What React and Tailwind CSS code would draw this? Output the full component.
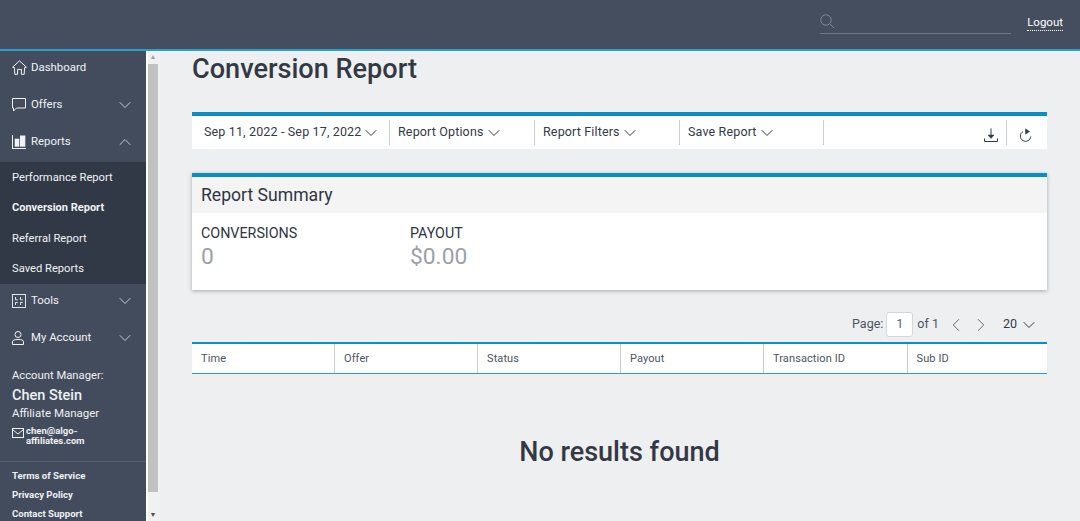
import React from "react";
import { ChevronDown, ChevronUp, ChevronLeft, ChevronRight } from "lucide-react";

const Home = () => (
  <svg width="15" height="15" viewBox="0 0 15 15" fill="none" stroke="currentColor" strokeWidth="1">
    <path d="M0.6 7.2 L7.5 0.8 L14.4 7.2 L12.6 7.6 L12.2 14.3 L9.4 14.3 L9.4 9.4 L5.6 9.4 L5.6 14.3 L2.8 14.3 L2.4 7.6 Z" />
  </svg>
);
const Chat = () => (
  <svg width="14" height="14" viewBox="0 0 14 14" fill="none" stroke="currentColor" strokeWidth="1">
    <path d="M0.5 0.5 H13.5 V10 H4.5 L1.5 13 V10 H0.5 Z" />
  </svg>
);
const Bars = () => (
  <svg width="14" height="14" viewBox="0 0 14 14" fill="currentColor">
    <path d="M0 0 H1 V13 H14 V14 H0 Z" />
    <rect x="2.7" y="3.7" width="4.6" height="8" />
    <rect x="8" y="0.5" width="5.3" height="11.2" />
  </svg>
);
const ToolsIcon = () => (
  <svg width="14" height="14" viewBox="0 0 14 14" fill="none" stroke="currentColor" strokeWidth="0.9">
    <rect x="0.5" y="0.5" width="13" height="13" />
    <path d="M3.5 3 V5.8 H5.8 M8.5 3 V5.8 H10.8 M3.5 8.5 H5.8 M3.5 8.5 V11 M8.5 8.5 H10.8 M8.5 8.5 V11" />
  </svg>
);
const User = () => (
  <svg width="12" height="14" viewBox="0 0 12 14" fill="none" stroke="currentColor" strokeWidth="1">
    <circle cx="6" cy="3.5" r="3" />
    <path d="M0.5 13.5 V10.6 C0.5 9.2 2.5 8.5 6 8.5 C9.5 8.5 11.5 9.2 11.5 10.6 V13.5 Z" />
  </svg>
);
const Mail = () => (
  <svg width="12" height="10" viewBox="0 0 12 10" fill="none" stroke="currentColor" strokeWidth="1">
    <rect x="0.5" y="0.5" width="11" height="9" />
    <path d="M0.5 1.5 L6 6 L11.5 1.5" />
  </svg>
);
const Search = () => (
  <svg width="15" height="15" viewBox="0 0 15 15" fill="none" stroke="#7d8694" strokeWidth="1">
    <circle cx="6" cy="6" r="5.2" />
    <path d="M9.8 9.8 L14 14" />
  </svg>
);
const Download = () => (
  <svg width="14" height="15" viewBox="0 0 14 15" fill="none" stroke="#333a47">
    <path d="M0.5 10.5 V13.5 H13.5 V10.5" strokeWidth="1" />
    <path d="M7 0.5 V8" strokeWidth="1" />
    <path d="M4 7 H10 L7 10.5 Z" fill="#333a47" strokeWidth="0.5" />
  </svg>
);
const Refresh = () => (
  <svg width="13" height="15" viewBox="0 0 13 15" fill="none" stroke="#333a47" strokeWidth="1">
    <path d="M4 3.6 A5.2 5.2 0 1 0 11.8 8.5" />
    <path d="M6.5 0.8 L10.5 3.5 L6.5 6.2 Z" fill="#333a47" strokeWidth="0.5" />
  </svg>
);

const Nav = ({ icon, label, chevron }) => (
  <div className="h-[37px] shrink-0 flex items-center pl-3 pr-[11px] text-[11.4px] text-[#f0f2f5]">
    <span className="w-[19px] shrink-0 flex items-center">{icon}</span>
    <span className="flex-1">{label}</span>
    {chevron === "down" && <ChevronDown size={20} strokeWidth={1.2} className="text-[#c8ccd3]" />}
    {chevron === "up" && <ChevronUp size={20} strokeWidth={1.2} className="text-[#c8ccd3]" />}
  </div>
);

const Sub = ({ label, bold }) => (
  <div className={`h-[30.4px] flex items-center pl-3 text-[#f0f2f5] ${bold ? "font-bold text-[11px]" : "text-[11.2px]"}`}>{label}</div>
);

const Menu = ({ label, w }) => (
  <div className={`flex items-center h-[25px] border-r border-[#c9ccd0] pl-2 text-[12.5px] tracking-[0.15px] text-[#333a47] ${w}`}>
    <span>{label}</span>
    <ChevronDown size={20} strokeWidth={1.2} />
  </div>
);

const Th = ({ label, w }) => (
  <div className={`flex items-center pl-[9px] pt-[1px] text-[11px] tracking-[0.1px] text-[#4d5460] ${w}`}>{label}</div>
);

export default function App() {
  return (
    <div className="h-[521px] w-[1080px] overflow-hidden flex flex-col bg-[#eeeff1] font-['Roboto',sans-serif]">
      <header className="h-[51px] shrink-0 bg-[#454e5e] border-b-2 border-[#2a9fc9] flex items-start justify-end pr-[17px]">
        <div className="w-[191px] h-[20px] mt-[14px] border-b border-[#6f7684] flex items-start">
          <Search />
        </div>
        <a className="ml-[16px] mt-[15px] text-[11.5px] text-white border-b border-dotted border-white leading-[15px]">Logout</a>
      </header>
      <div className="flex-1 flex min-h-0">
        <aside className="w-[146px] shrink-0 bg-[#434c5c] flex flex-col overflow-hidden">
          <div className="-mt-[2px] shrink-0">
            <Nav icon={<Home />} label="Dashboard" />
            <Nav icon={<Chat />} label="Offers" chevron="down" />
            <Nav icon={<Bars />} label="Reports" chevron="up" />
          </div>
          <div className="mt-[2px] pt-[1px] bg-[#313846] h-[122px] shrink-0">
            <Sub label="Performance Report" />
            <Sub label="Conversion Report" bold />
            <Sub label="Referral Report" />
            <Sub label="Saved Reports" />
          </div>
          <div className="-mt-[2px] shrink-0">
            <Nav icon={<ToolsIcon />} label="Tools" chevron="down" />
            <Nav icon={<User />} label="My Account" chevron="down" />
          </div>
          <div className="shrink-0 pl-3 pt-[11px] text-[#eef0f3] pb-[15px] border-b border-[#566072]">
            <div className="text-[11.25px] leading-[18px]">Account Manager:</div>
            <div className="text-[14.5px] font-medium leading-[22px]">Chen Stein</div>
            <div className="text-[11.5px] leading-[13px]">Affiliate Manager</div>
            <div className="flex mt-[6px]">
              <span className="w-[14px] shrink-0 pt-[2px]"><Mail /></span>
              <span className="w-[80px] text-[9.5px] font-bold leading-[10px]">chen@algo-<br />affiliates.com</span>
            </div>
          </div>
          <div className="shrink-0 pl-3 pt-[5px] text-[9.6px] font-bold text-[#eef0f3]">
            <div className="h-[19px] flex items-center">Terms of Service</div>
            <div className="h-[19px] flex items-center">Privacy Policy</div>
            <div className="h-[19px] flex items-center">Contact Support</div>
          </div>
        </aside>
        <div className="w-[14px] shrink-0 bg-[#f1f1f1] border-l-2 border-white flex flex-col items-center pr-[2px]">
          <div className="h-[13px] shrink-0 flex items-center justify-center text-[#a3a3a3] text-[7px] leading-none">▲</div>
          <div className="h-[428px] shrink-0 w-full bg-[#c1c1c1]" />
          <div className="flex-1 flex items-end pb-[2px] justify-center text-[#505050] text-[7px] leading-none">▼</div>
        </div>
        <main className="flex-1 min-w-0 pl-[32px] pr-[33px]">
          <h1 className="text-[27.1px] font-medium text-[#333944] leading-[32px] mt-[2px]">Conversion Report</h1>
          <section className="mt-[27px] h-[37px] box-border bg-white border-t-[4px] border-[#0b8fc0] flex items-center">
            <Menu label="Sep 11, 2022 - Sep 17, 2022" w="w-[198px] pl-[12px]" />
            <Menu label="Report Options" w="w-[145px]" />
            <Menu label="Report Filters" w="w-[145px]" />
            <Menu label="Save Report" w="w-[144px]" />
            <div className="flex-1 flex justify-end items-center h-[25px] pr-[15px]">
              <span className="pr-[8px] pt-[5px] border-r border-[#c9ccd0] h-[25px] flex items-center mr-[12px]"><Download /></span>
              <span className="pt-[5px]"><Refresh /></span>
            </div>
          </section>
          <section className="mt-[24px] h-[117px] bg-white border-t-[4px] border-[#0b8fc0] shadow-[0_1px_4px_rgba(0,0,0,0.3)]">
            <div className="h-[36px] bg-[#f4f4f4] flex items-center pl-[9px] text-[17.6px] font-normal text-[#2f3542]">Report Summary</div>
            <div className="flex pl-[9px] pt-[12px]">
              <div className="w-[209px]">
                <div className="text-[14.3px] text-[#2f3542] leading-[16px]">CONVERSIONS</div>
                <div className="text-[22.8px] text-[#9ca1a9] leading-[32px]">0</div>
              </div>
              <div>
                <div className="text-[14.3px] text-[#2f3542] leading-[16px]">PAYOUT</div>
                <div className="text-[22.8px] text-[#9ca1a9] leading-[32px]">$0.00</div>
              </div>
            </div>
          </section>
          <div className="mt-[22px] h-[25px] flex items-center justify-end text-[12.5px] text-[#4d5460]">
            <span>Page:</span>
            <span className="ml-[3px] w-[27px] h-[25px] bg-white border border-[#d4d6d9] rounded-[3px] flex items-center justify-center text-[#4a6a80]">1</span>
            <span className="ml-[4px]">of 1</span>
            <ChevronLeft size={22} strokeWidth={1} className="ml-[6px] text-[#555c68]" />
            <ChevronRight size={22} strokeWidth={1} className="ml-[3px] text-[#555c68]" />
            <span className="ml-[11px] text-[#333a47]">20</span>
            <ChevronDown size={20} strokeWidth={1.2} className="ml-[2px] mr-[8px] text-[#333a47]" />
          </div>
          <div className="mt-[5px] h-[32px] bg-white border-t-[2px] border-b border-t-[#0b8fc0] border-b-[#2a9fc9] flex">
            <Th label="Time" w="w-[143px] border-r border-[#c9ccd0]" />
            <Th label="Offer" w="w-[143px] border-r border-[#c9ccd0]" />
            <Th label="Status" w="w-[143px] border-r border-[#c9ccd0]" />
            <Th label="Payout" w="w-[143px] border-r border-[#c9ccd0]" />
            <Th label="Transaction ID" w="w-[143.5px] border-r border-[#c9ccd0]" />
            <Th label="Sub ID" w="flex-1" />
          </div>
          <div className="mt-[60px] text-center text-[27px] font-medium text-[#333944] leading-[36px]">No results found</div>
        </main>
      </div>
    </div>
  );
}
